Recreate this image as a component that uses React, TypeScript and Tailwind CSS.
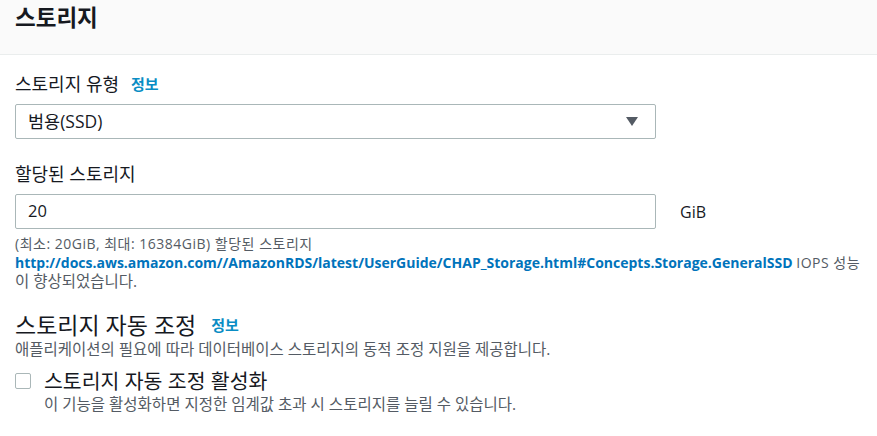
const font = { fontFamily: '"Open Sans", "Noto Sans CJK KR", sans-serif' };

function InfoLink({ gap }: { gap: string }) {
  return <span className={`${gap} text-[15px] font-bold text-[#0a8dc4]`}>정보</span>;
}

export default function App() {
  return (
    <div className="w-[877px] h-[436px] bg-white text-[#16191f] overflow-hidden" style={font}>
      {/* Header */}
      <div className="h-[55px] bg-[#fafafa] border-b border-[#eaeded] px-[15px] pt-[2px]">
        <h2 className="text-[22.5px] font-bold leading-[32px]">스토리지</h2>
      </div>

      <div className="px-[15px] pt-[16px]">
        {/* Storage type */}
        <div className="flex items-center h-[26px]">
          <span className="text-[18px]">스토리지 유형</span>
          <InfoLink gap="ml-[12px]" />
        </div>
        <div className="mt-[7px] w-[641px] h-[35px] border border-[#aab7b8] rounded-[2px] flex items-center justify-between pl-[12px] pr-[17px]">
          <span className="text-[17.5px]">범용(SSD)</span>
          <svg width="12" height="9" viewBox="0 0 12 9">
            <path d="M0 0 H12 L6 9 Z" fill="#545b64" />
          </svg>
        </div>

        {/* Allocated storage */}
        <div className="mt-[22px] h-[26px] flex items-center">
          <span className="text-[18px]">할당된 스토리지</span>
        </div>
        <div className="mt-[7px] flex items-center">
          <div className="w-[641px] h-[35px] border border-[#aab7b8] rounded-[2px] flex items-center pl-[12px]">
            <span className="text-[16.5px]">20</span>
          </div>
          <span className="ml-[24px] text-[16px] text-[#16191f]">GiB</span>
        </div>
        <div className="mt-[6px] text-[14px] leading-[18.5px] text-[#545b64] whitespace-nowrap">
          <div className="tracking-[0.5px]">(최소: 20GiB, 최대: 16384GiB) 할당된 스토리지</div>
          <div>
            <span className="font-bold text-[#0073bb]">
              http://docs.aws.amazon.com//AmazonRDS/latest/UserGuide/CHAP_Storage.html#Concepts.Storage.GeneralSSD
            </span>{" "}
            <span className="tracking-[0.5px]">IOPS 성능</span>
          </div>
          <div className="text-[15.5px] leading-[18px]">이 향상되었습니다.</div>
        </div>

        {/* Autoscaling */}
        <div className="mt-[20px] flex items-center h-[30px]">
          <span className="text-[23px]">스토리지 자동 조정</span>
          <InfoLink gap="ml-[15px]" />
        </div>
        <div className="text-[15.5px] leading-[18px] text-[#545b64] whitespace-nowrap">
          애플리케이션의 필요에 따라 데이터베이스 스토리지의 동적 조정 지원을 제공합니다.
        </div>
        <div className="mt-[10px] flex items-start">
          <div className="mt-[5px] w-[16px] h-[16px] border border-[#aab7b8] rounded-[2px] bg-white" />
          <div className="ml-[13px]">
            <div className="text-[20.5px] leading-[26px]">스토리지 자동 조정 활성화</div>
            <div className="text-[15.5px] leading-[20px] text-[#545b64] whitespace-nowrap">
              이 기능을 활성화하면 지정한 임계값 초과 시 스토리지를 늘릴 수 있습니다.
            </div>
          </div>
        </div>
      </div>
    </div>
  );
}
